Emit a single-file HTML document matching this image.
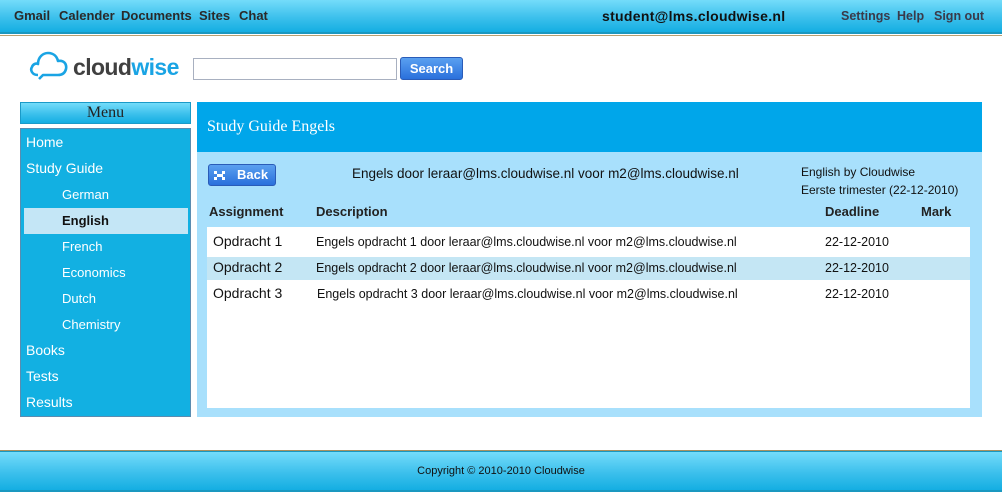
<!DOCTYPE html>
<html><head><meta charset="utf-8"><style>
*{margin:0;padding:0;box-sizing:border-box}
body{width:1002px;height:497px;background:#fff;position:relative;overflow:hidden;font-family:"Liberation Sans",sans-serif}
.a{position:absolute;white-space:nowrap}
.bar{background:linear-gradient(#74dcfa,#3cc0ec 55%,#14aee2);}
.t{font-size:13px;font-weight:bold;color:#2a2a2a}
.m{color:#fff;font-size:14px}
.s{color:#fff;font-size:13px}
.r{font-size:12.5px;color:#111}
</style></head><body>
<div class="a bar" style="left:0;top:0;width:1002px;height:34px;border-bottom:2px solid #1a98c0"></div>
<div class="a" style="left:0;top:35px;width:1002px;height:1px;background:#b8a070"></div>
<div class="a t" style="left:14px;top:8px">Gmail</div>
<div class="a t" style="left:59px;top:8px">Calender</div>
<div class="a t" style="left:121px;top:8px">Documents</div>
<div class="a t" style="left:199px;top:8px">Sites</div>
<div class="a t" style="left:239px;top:8px">Chat</div>
<div class="a" style="left:602px;top:8px;font-size:14px;font-weight:bold;color:#111;letter-spacing:0.3px">student@lms.cloudwise.nl</div>
<div class="a t" style="left:841px;top:9px;color:#3a3a4a;font-size:12.5px">Settings</div>
<div class="a t" style="left:897px;top:9px;color:#3a3a4a;font-size:12.5px">Help</div>
<div class="a t" style="left:934px;top:9px;color:#3a3a4a;font-size:12.5px">Sign out</div>

<svg class="a" style="left:29px;top:50px" width="40" height="32" viewBox="0 0 40 32"><path d="M9 25 C3 25 1 20 3 17 C4 14 7 13 9 14 C9 7 14 3 19 3 C25 3 28 7 29 11 C35 10 38 14 37 19 C36 23 33 25 29 25 L14 25 L10 29" fill="none" stroke="#1aa4e4" stroke-width="2.6" stroke-linejoin="round"/></svg>
<div class="a" style="left:73px;top:54px;font-size:23px;font-weight:bold;letter-spacing:-0.6px"><span style="color:#404040">cloud</span><span style="color:#1aa4e4">wise</span></div>
<div class="a" style="left:193px;top:58px;width:204px;height:22px;border:1px solid #a8b0c0;background:#fff"></div>
<div class="a" style="left:400px;top:57px;width:63px;height:23px;border-radius:3px;background:linear-gradient(#5aa0f0,#2a70dc);border:1px solid #2a5cb8;color:#fff;font-size:13px;font-weight:bold;text-align:center;line-height:21px">Search</div>

<div class="a bar" style="left:20px;top:102px;width:171px;height:22px;border:1px solid #1a9ac8;text-align:center;font-family:'Liberation Serif',serif;font-size:16px;line-height:20px;color:#222">Menu</div>
<div class="a" style="left:20px;top:128px;width:171px;height:289px;background:#12b0e2;border:1px solid #5a8cb0"></div>
<div class="a m" style="left:26px;top:134px">Home</div>
<div class="a m" style="left:26px;top:160px">Study Guide</div>
<div class="a s" style="left:62px;top:187px">German</div>
<div class="a" style="left:24px;top:208px;width:164px;height:26px;background:#c4e6f6"></div>
<div class="a s" style="left:62px;top:213px;color:#111;font-weight:bold">English</div>
<div class="a s" style="left:62px;top:239px">French</div>
<div class="a s" style="left:62px;top:265px">Economics</div>
<div class="a s" style="left:62px;top:291px">Dutch</div>
<div class="a s" style="left:62px;top:317px">Chemistry</div>
<div class="a m" style="left:26px;top:342px">Books</div>
<div class="a m" style="left:26px;top:368px">Tests</div>
<div class="a m" style="left:26px;top:394px">Results</div>

<div class="a" style="left:197px;top:102px;width:785px;height:315px;background:#a8e0fc"></div>
<div class="a" style="left:197px;top:102px;width:785px;height:50px;background:#00a6ea"></div>
<div class="a" style="left:207px;top:118px;color:#fff;font-family:'Liberation Serif',serif;font-size:16px">Study Guide Engels</div>
<div class="a" style="left:208px;top:164px;width:68px;height:22px;border-radius:3px;background:linear-gradient(#5aa0f0,#2a70dc);border:1px solid #2a5cb8;color:#fff;font-size:13px;font-weight:bold;line-height:19px;padding-left:28px">Back</div>
<div class="a" style="left:214px;top:171px;width:3px;height:3px;background:#fff;box-shadow:3px 3px #fff,0 6px #fff,8px 0 #fff,8px 6px #fff,6px 3px #fff"></div>
<div class="a" style="left:352px;top:166px;font-size:13.5px;color:#111">Engels door leraar@lms.cloudwise.nl voor m2@lms.cloudwise.nl</div>
<div class="a" style="left:801px;top:165px;font-size:12px;color:#111">English by Cloudwise</div>
<div class="a" style="left:801px;top:183px;font-size:12px;color:#111">Eerste trimester (22-12-2010)</div>
<div class="a t" style="left:209px;top:204px;color:#222">Assignment</div>
<div class="a t" style="left:316px;top:204px;color:#222">Description</div>
<div class="a t" style="left:825px;top:204px;color:#222">Deadline</div>
<div class="a t" style="left:921px;top:204px;color:#222">Mark</div>
<div class="a" style="left:207px;top:227px;width:763px;height:181px;background:#fff"></div>
<div class="a" style="left:207px;top:257px;width:763px;height:23px;background:#c4e6f4"></div>
<div class="a" style="left:213px;top:233px;font-size:14px;color:#111">Opdracht 1</div>
<div class="a r" style="left:316px;top:235px">Engels opdracht 1 door leraar@lms.cloudwise.nl voor m2@lms.cloudwise.nl</div>
<div class="a r" style="left:825px;top:235px">22-12-2010</div>
<div class="a" style="left:213px;top:259px;font-size:14px;color:#111">Opdracht 2</div>
<div class="a r" style="left:316px;top:261px">Engels opdracht 2 door leraar@lms.cloudwise.nl voor m2@lms.cloudwise.nl</div>
<div class="a r" style="left:825px;top:261px">22-12-2010</div>
<div class="a" style="left:213px;top:285px;font-size:14px;color:#111">Opdracht 3</div>
<div class="a r" style="left:317px;top:287px">Engels opdracht 3 door leraar@lms.cloudwise.nl voor m2@lms.cloudwise.nl</div>
<div class="a r" style="left:825px;top:287px">22-12-2010</div>

<div class="a" style="left:0;top:450px;width:1002px;height:1px;background:#a89060"></div>
<div class="a bar" style="left:0;top:451px;width:1002px;height:41px;border-top:1px solid #1a98c0;border-bottom:2px solid #1a98c0"></div>
<div class="a" style="left:0;top:465px;width:1002px;text-align:center;font-size:11px;color:#111">Copyright © 2010-2010 Cloudwise</div>
</body></html>
